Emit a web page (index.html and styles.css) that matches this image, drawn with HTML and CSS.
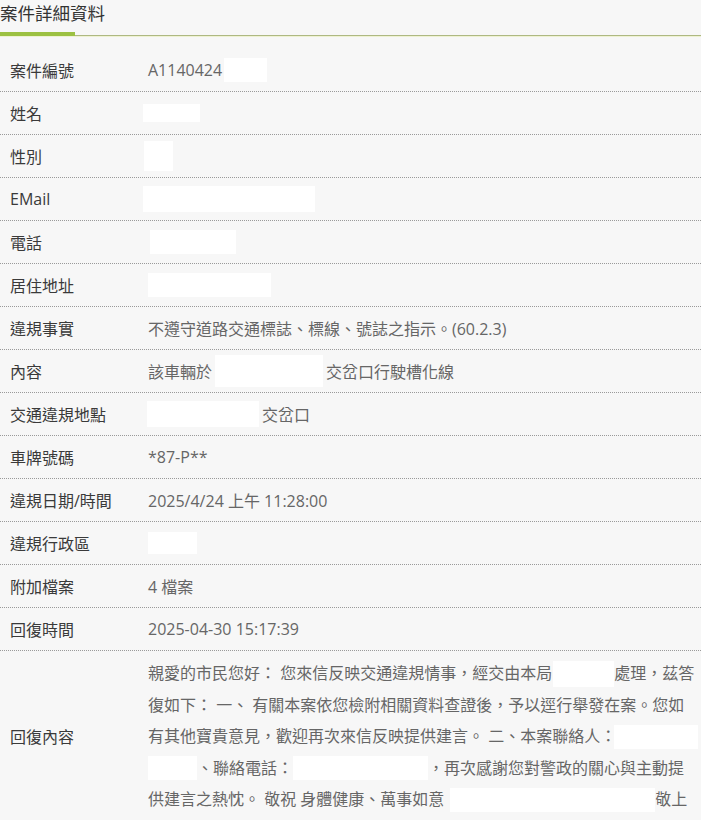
FILE: index.html
```html
<!DOCTYPE html>
<html lang="zh-Hant">
<head>
<meta charset="utf-8">
<title>案件詳細資料</title>
<link rel="stylesheet" href="styles.css">
</head>
<body>
<div class="page">
  <div class="head">
    <div class="head-title">案件詳細資料</div>
    <div class="head-bar"></div>
  </div>
  <div class="table">
    <div class="row"><div class="label">案件編號</div><div class="value">A1140424<span class="mask m-id"></span></div></div>
    <div class="row"><div class="label">姓名</div><div class="value"><span class="mask m-name"></span></div></div>
    <div class="row"><div class="label">性別</div><div class="value"><span class="mask m-sex"></span></div></div>
    <div class="row"><div class="label">EMail</div><div class="value"><span class="mask m-mail"></span></div></div>
    <div class="row"><div class="label">電話</div><div class="value"><span class="mask m-tel"></span></div></div>
    <div class="row"><div class="label">居住地址</div><div class="value"><span class="mask m-addr"></span></div></div>
    <div class="row"><div class="label">違規事實</div><div class="value">不遵守道路交通標誌、標線、號誌之指示。(60.2.3)</div></div>
    <div class="row"><div class="label">內容</div><div class="value">該車輛於<span class="mask m-road"></span>交岔口行駛槽化線</div></div>
    <div class="row"><div class="label">交通違規地點</div><div class="value"><span class="mask m-place"></span>交岔口</div></div>
    <div class="row"><div class="label">車牌號碼</div><div class="value">*87-P**</div></div>
    <div class="row"><div class="label">違規日期/時間</div><div class="value">2025/4/24 上午 11:28:00</div></div>
    <div class="row"><div class="label">違規行政區</div><div class="value"><span class="mask m-dist"></span></div></div>
    <div class="row"><div class="label">附加檔案</div><div class="value">4 檔案</div></div>
    <div class="row"><div class="label">回復時間</div><div class="value">2025-04-30 15:17:39</div></div>
    <div class="row row-reply">
      <div class="label">回復內容</div>
      <div class="value reply">
        <span class="line">親愛的市民您好： 您來信反映交通違規情事，經交由本局<span class="mask m-r1"></span>處理，茲答</span>
        <span class="line">復如下： 一、 有關本案依您檢附相關資料查證後，予以逕行舉發在案。您如</span>
        <span class="line">有其他寶貴意見，歡迎再次來信反映提供建言。 二、本案聯絡人：<span class="mask m-r3"></span></span>
        <span class="line"><span class="mask m-r4a"></span>、聯絡電話：<span class="mask m-r4b"></span>，再次感謝您對警政的關心與主動提</span>
        <span class="line">供建言之熱忱。 敬祝 身體健康、萬事如意<span class="mask m-r5"></span>敬上</span>
      </div>
    </div>
  </div>
</div>
</body>
</html>
```

FILE: styles.css
```css
html, body {
  margin: 0;
  padding: 0;
  background: #f7f7f7;
}
body {
  font-family: "Open Sans", "Noto Sans CJK TC", sans-serif;
  color: #555;
  font-size: 16px;
}
.page {
  width: 701px;
  overflow: hidden;
}
.head {
  border-bottom: 1px solid #aeb882;
  box-shadow: 0 1px 0 #eef2d2;
}
.head-title {
  font-size: 17.5px;
  line-height: 27px;
  color: #333;
  white-space: nowrap;
}
.head-bar {
  width: 75px;
  height: 4px;
  margin-top: 5px;
  margin-bottom: -1px;
  background: #9cc142;
}
.table {
  margin-top: 13px;
}
.row {
  display: grid;
  grid-template-columns: 148px 1fr;
  align-items: center;
  height: 42px;
  border-bottom: 1px dotted #9a9a9a;
}
.label {
  padding-left: 10px;
  color: #3a3a3a;
  white-space: nowrap;
}
.value {
  color: #666;
  white-space: nowrap;
  display: flex;
  align-items: center;
}
.mask {
  display: inline-block;
  background: #fff;
  height: 24px;
}
.m-id { width: 43px; margin-left: 2px; }
.m-name { width: 57px; height: 18px; margin-left: -5px; }
.m-sex { width: 29px; height: 30px; margin-left: -4px; }
.m-mail { width: 172px; height: 26px; margin-left: -5px; }
.m-tel { width: 86px; margin-left: 2px; }
.m-addr { width: 123px; }
.m-road { width: 108px; height: 32px; margin-left: 3px; margin-right: 3px; }
.m-place { width: 112px; height: 26px; margin-left: -1px; margin-right: 3px; }
.m-dist { width: 49px; height: 22px; }

.row-reply {
  height: auto;
  border-bottom: none;
}
.reply {
  display: block;
  padding: 7px 0 6px;
  line-height: 31.5px;
}
.line {
  display: flex;
  align-items: center;
  height: 31.5px;
  white-space: pre;
}
.m-r1 { width: 61px; height: 26px; margin-left: 1px; }
.m-r3 { width: 84px; height: 24px; margin-left: -2px; }
.m-r4a { width: 49px; height: 24px; }
.m-r4b { width: 135px; height: 24px; }
.m-r5 { width: 205px; height: 24px; margin-left: 6px; }
```
